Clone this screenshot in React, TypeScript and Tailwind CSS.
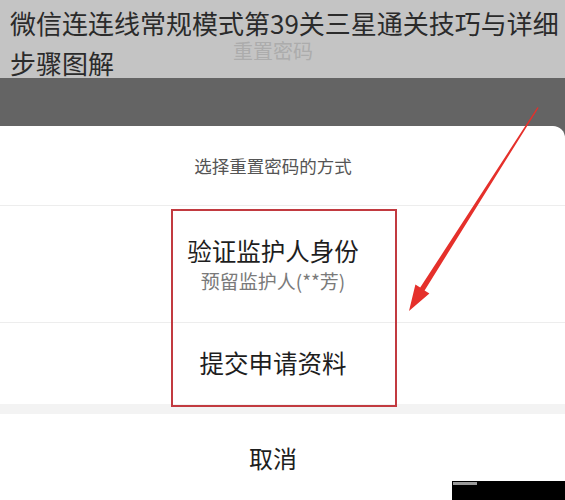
const cjk = "font-['Noto_Sans_CJK_SC','Noto_Sans',sans-serif]";

function Arrow() {
  return (
    <svg className="pointer-events-none absolute left-0 top-0" width="565" height="500" viewBox="0 0 565 500">
      <polygon
        points="538.6,107.8 424.6,290.4 429.4,293.6 409,311 415.4,284.4 420.2,287.6 537.4,107.2"
        fill="#e5302b"
      />
    </svg>
  );
}

export default function App() {
  return (
    <div className={`relative h-[500px] w-[565px] overflow-hidden bg-[#646464] ${cjk}`}>
      {/* 标题遮罩 */}
      <div className="relative h-[78px] bg-[#c4c4c4] pl-[10px] pt-[3px]">
        <span className="absolute left-[233px] top-[38px] text-[20px] leading-[26px] text-[#acacac]">重置密码</span>
        <p className="relative text-[26px] leading-[40px] text-[#2b2b2b]">
          微信连连线常规模式第39关三星通关技巧与详细步骤图解
        </p>
      </div>
      <div className="h-[48px]" />

      {/* 底部弹层 */}
      <div className="rounded-tr-[12px] bg-white">
        <div className="flex h-[79px] items-center justify-center pr-[19px] pt-[2px] text-[17.5px] text-[#555]">
          选择重置密码的方式
        </div>
        <div className="h-px bg-[#ededed]" />
        <div className="flex h-[116px] flex-col items-center justify-center pr-[19px]">
          <p className="text-[24.5px] leading-[32px] text-[#1e1e1e]">验证监护人身份</p>
          <p className="mt-[1px] text-[19px] leading-[26px] text-[#7a7a7a]">预留监护人(**芳)</p>
        </div>
        <div className="h-px bg-[#ededed]" />
        <div className="flex h-[81px] items-center justify-center pr-[19px] text-[24.5px] text-[#1e1e1e]">
          提交申请资料
        </div>
        <div className="h-[10px] bg-[#f3f3f3]" />
        <div className="flex h-[88px] items-center justify-center pr-[19px] text-[24px] text-[#1e1e1e]">
          取消
        </div>
      </div>

      {/* 标注 */}
      <div className="absolute left-[171px] top-[209px] h-[198px] w-[226px] border-2 border-[#c23a40]" />
      <Arrow />
      <div className="absolute left-[452px] top-[481px] h-[19px] w-[113px] bg-black">
        <div className="ml-[1px] mt-[1px] h-[3px] w-[24px] bg-[#9a9a9a]" />
      </div>
    </div>
  );
}
